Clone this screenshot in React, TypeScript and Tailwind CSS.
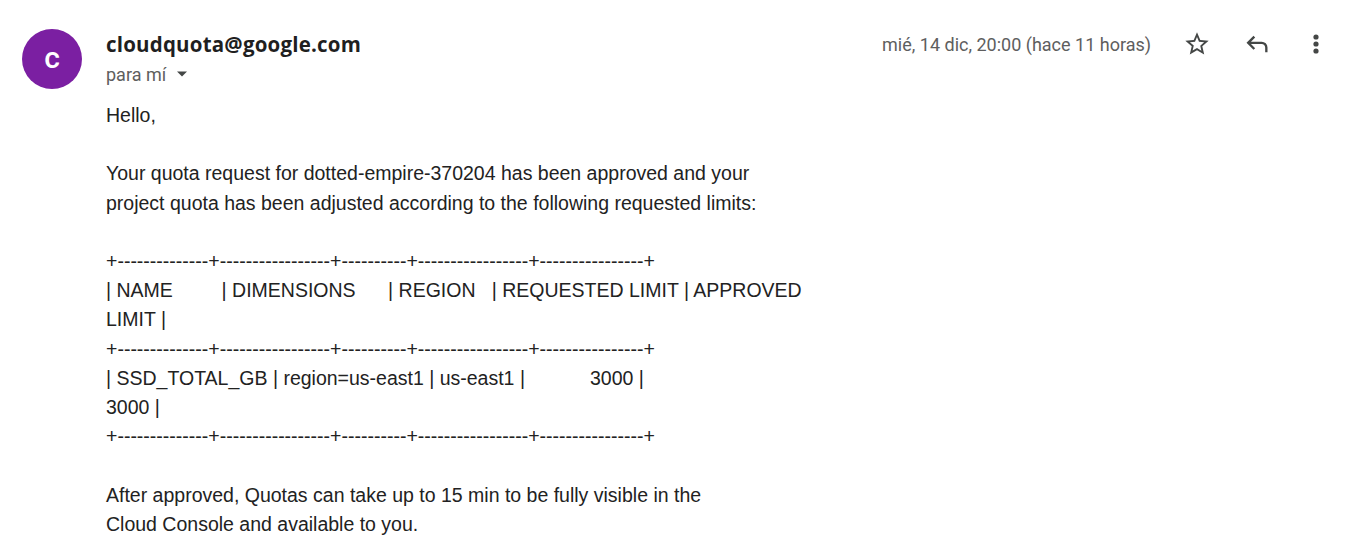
import React from "react";

const tableLines = [
  "+--------------+-----------------+----------+-----------------+----------------+",
  "| NAME         | DIMENSIONS      | REGION   | REQUESTED LIMIT | APPROVED",
  "LIMIT |",
  "+--------------+-----------------+----------+-----------------+----------------+",
  "| SSD_TOTAL_GB | region=us-east1 | us-east1 |            3000 |",
  "3000 |",
  "+--------------+-----------------+----------+-----------------+----------------+",
];

function StarIcon() {
  return (
    <svg width="28" height="28" viewBox="0 0 24 24" fill="#444746">
      <path d="M22 9.24l-7.19-.62L12 2 9.19 8.63 2 9.24l5.46 4.73L5.82 21 12 17.27 18.18 21l-1.63-7.03L22 9.24zM12 15.4l-3.76 2.27 1-4.28-3.32-2.88 4.38-.38L12 6.1l1.71 4.04 4.38.38-3.32 2.88 1 4.28L12 15.4z" />
    </svg>
  );
}

function ReplyIcon() {
  return (
    <svg width="28" height="28" viewBox="0 -960 960 960" fill="#444746">
      <path d="M760-200v-160q0-50-35-85t-85-35H273l144 144-57 56-240-240 240-240 57 56-144 144h367q83 0 141.5 58.5T840-360v160h-80Z" />
    </svg>
  );
}

function MoreIcon() {
  return (
    <svg width="28" height="28" viewBox="0 0 28 28" fill="#444746">
      <circle cx="14" cy="7" r="2.6" />
      <circle cx="14" cy="14" r="2.6" />
      <circle cx="14" cy="21" r="2.6" />
    </svg>
  );
}

export default function App() {
  return (
    <div className="w-[1354px] h-[552px] bg-white overflow-hidden flex font-['Liberation_Sans',Arial,sans-serif]">
      <div className="pl-[22px] pt-[29px] shrink-0">
        <div className="w-[60px] h-[60px] rounded-full bg-[#7b1fa2] flex items-center justify-center">
          <span className="text-white text-[30px] leading-none font-['Roboto',sans-serif] font-medium pb-[3px]">c</span>
        </div>
      </div>
      <div className="ml-[24px] flex-1 pr-[18px]">
        <div className="flex justify-between pt-[31px]">
          <div>
            <div className="text-[20.5px] leading-[26px] font-bold tracking-[0.2px] text-[#1f1f1f] font-['Open_Sans',sans-serif]">
              cloudquota@google.com
            </div>
            <div className="mt-[5px] flex items-center h-[24px] text-[18px] text-[#5e5e5e] font-['Roboto',sans-serif]">
              <span>para mí</span>
              <svg className="ml-[10px]" width="12" height="8" viewBox="0 0 12 8" fill="#444746">
                <path d="M1 1.5h10L6 6.5z" />
              </svg>
            </div>
          </div>
          <div className="flex items-center h-[26px]">
            <span className="text-[18px] text-[#5e5e5e] font-['Roboto',sans-serif]">
              mié, 14 dic, 20:00 (hace 11 horas)
            </span>
            <div className="ml-[26px] w-[40px] h-[40px] flex items-center justify-center">
              <StarIcon />
            </div>
            <div className="ml-[20px] w-[40px] h-[40px] flex items-center justify-center">
              <ReplyIcon />
            </div>
            <div className="ml-[19px] w-[40px] h-[40px] flex items-center justify-center">
              <MoreIcon />
            </div>
          </div>
        </div>
        <div className="mt-[15px] text-[19.5px] leading-[29.2px] text-[#222222]">
          <div>Hello,</div>
          <div className="h-[29.2px]" />
          <div>Your quota request for dotted-empire-370204 has been approved and your</div>
          <div>project quota has been adjusted according to the following requested limits:</div>
          <div className="h-[29.2px]" />
          {tableLines.map((l, i) => (
            <div key={i} className="whitespace-pre">
              {l}
            </div>
          ))}
          <div className="h-[29.2px]" />
          <div>After approved, Quotas can take up to 15 min to be fully visible in the</div>
          <div>Cloud Console and available to you.</div>
        </div>
      </div>
    </div>
  );
}
